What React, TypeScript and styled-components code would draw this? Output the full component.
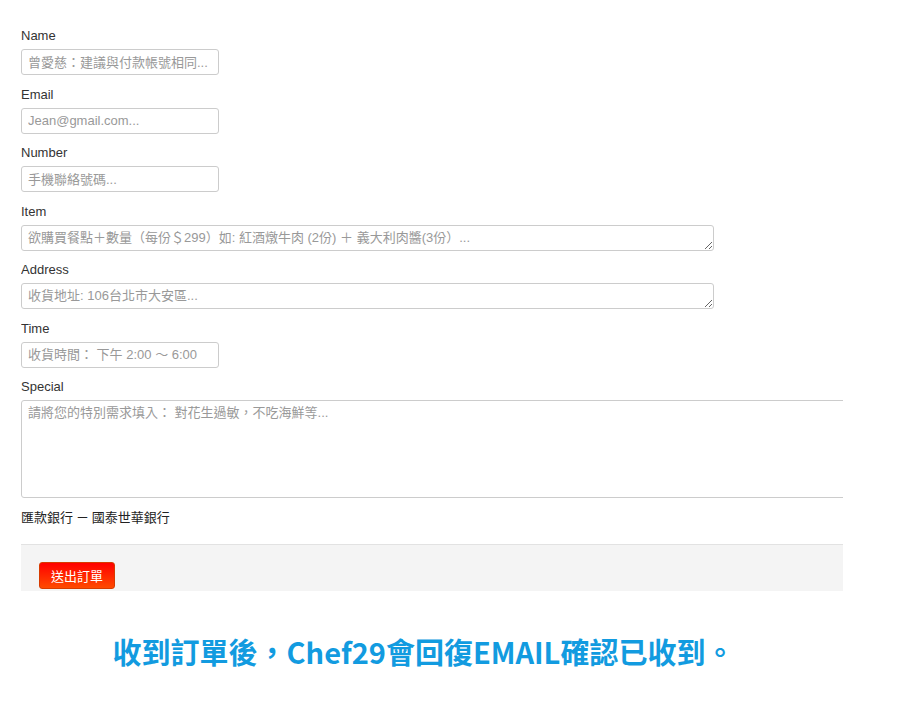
import React from "react";
import styled, { createGlobalStyle } from "styled-components";

const Global = createGlobalStyle`
  html, body { margin: 0; padding: 0; background: #fff; }
  body { font-family: "Liberation Sans", Arial, "Noto Sans CJK TC", sans-serif; }
`;

const Page = styled.div`
  width: 920px;
  padding-top: 27px;
`;

const Form = styled.form`
  margin-left: 21px;
  width: 822px;
  overflow: hidden;
`;

const Field = styled.div<{ $last?: boolean }>`
  margin-bottom: ${(p) => (p.$last ? "0" : "10.5px")};
`;

const Label = styled.label`
  display: block;
  font-size: 13px;
  line-height: 18px;
  color: #333;
  margin-bottom: 4px;
`;

const baseInput = `
  box-sizing: border-box;
  display: block;
  height: 26px;
  border: 1px solid #ccc;
  border-radius: 3px;
  padding: 0 6px;
  font-size: 13px;
  font-family: "Liberation Sans", Arial, "Noto Sans CJK TC", sans-serif;
  color: #555;
  background: #fff;
  outline: none;
  &::placeholder { color: #999; }
`;

const Input = styled.input`
  ${baseInput}
  width: 198px;
`;

const Area = styled.textarea<{ $tall?: boolean }>`
  ${baseInput}
  width: ${(p) => (p.$tall ? "900px" : "693px")};
  height: ${(p) => (p.$tall ? "98px" : "26px")};
  padding-top: 4px;
  line-height: 16px;
  resize: vertical;
`;

const Bank = styled.p`
  margin: 10px 0 0;
  font-size: 13px;
  line-height: 18px;
  color: #222;
  font-family: "Noto Sans CJK TC", "Liberation Sans", sans-serif;
`;

const Footer = styled.div`
  margin-top: 18px;
  border-top: 1px solid #e2e2e2;
  background: #f4f4f4;
  padding: 17px 18px 1px;
  height: 28px;
`;

const Submit = styled.button`
  box-sizing: border-box;
  height: 27px;
  width: 76px;
  padding: 0;
  border: 1px solid #d73b00;
  border-radius: 3px;
  background: linear-gradient(to bottom, #ff0000, #ff4a00);
  color: #fff;
  font-size: 13px;
  font-family: "Noto Sans CJK TC", sans-serif;
  cursor: pointer;
`;

const Notice = styled.p`
  margin: 40px 0 0 21px;
  width: 843px;
  padding-right: 38px;
  box-sizing: border-box;
  text-align: center;
  font-size: 29px;
  line-height: 40px;
  font-weight: bold;
  color: #129be0;
  font-family: "Noto Sans CJK TC", sans-serif;
`;

export default function App() {
  return (
    <Page>
      <Global />
      <Form>
        <Field>
          <Label>Name</Label>
          <Input placeholder="曾愛慈：建議與付款帳號相同..." />
        </Field>
        <Field>
          <Label>Email</Label>
          <Input placeholder="Jean@gmail.com..." />
        </Field>
        <Field>
          <Label>Number</Label>
          <Input placeholder="手機聯絡號碼..." />
        </Field>
        <Field>
          <Label>Item</Label>
          <Area placeholder="欲購買餐點＋數量（每份＄299）如: 紅酒燉牛肉 (2份) ＋ 義大利肉醬(3份）..." />
        </Field>
        <Field>
          <Label>Address</Label>
          <Area placeholder="收貨地址: 106台北市大安區..." />
        </Field>
        <Field>
          <Label>Time</Label>
          <Input placeholder="收貨時間： 下午 2:00 ～ 6:00" />
        </Field>
        <Field $last>
          <Label>Special</Label>
          <Area $tall placeholder="請將您的特別需求填入： 對花生過敏，不吃海鮮等..." />
        </Field>
        <Bank>匯款銀行 － 國泰世華銀行</Bank>
        <Footer>
          <Submit type="button">送出訂單</Submit>
        </Footer>
      </Form>
      <Notice>收到訂單後，Chef29會回復EMAIL確認已收到。</Notice>
    </Page>
  );
}
